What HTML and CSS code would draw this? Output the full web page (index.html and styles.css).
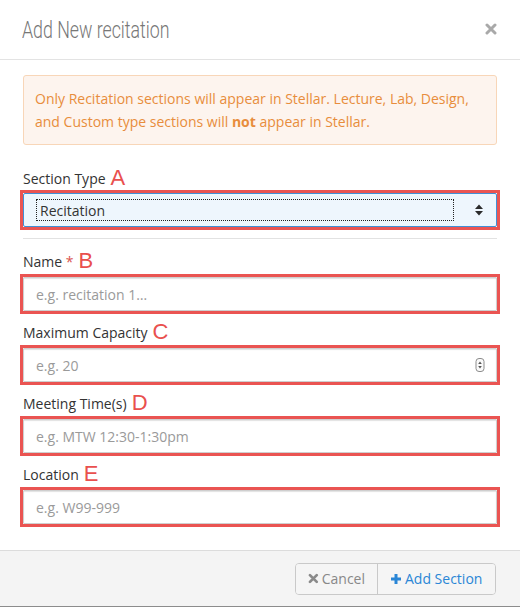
FILE: index.html
```html
<!DOCTYPE html>
<html>
<head>
<meta charset="utf-8">
<link rel="stylesheet" href="styles.css">
</head>
<body>
<div class="modal">
  <div class="header">
    <h4 class="title">Add New recitation</h4>
    <svg class="close" width="12" height="12" viewBox="0 0 12 12"><path d="M2 2 L10 10 M10 2 L2 10" stroke="#a9a9a9" stroke-width="3" stroke-linecap="round"/></svg>
  </div>
  <div class="body">
    <p class="alert">Only Recitation sections will appear in Stellar. Lecture, Lab, Design, and Custom type sections will <b>not</b> appear in Stellar.</p>

    <div class="label-row first"><span class="label">Section Type</span><span class="letter">A</span></div>
    <div class="box">
      <div class="select">
        <span class="focus-ring">Recitation</span>
        <svg class="carets" width="10" height="14" viewBox="0 0 10 14"><path d="M1 6 L5 1.5 L9 6 Z M1 8 L5 12.5 L9 8 Z" fill="#2b2b2b"/></svg>
      </div>
    </div>
    <div class="rule"></div>

    <div class="group">
      <div class="label-row"><span class="label">Name <span class="req">*</span></span><span class="letter">B</span></div>
      <div class="box"><input class="input" type="text" placeholder="e.g. recitation 1…"></div>
    </div>
    <div class="group">
      <div class="label-row"><span class="label">Maximum Capacity</span><span class="letter">C</span></div>
      <div class="box">
        <div class="input number">
          <span class="ph">e.g. 20</span>
          <svg class="spin" width="10" height="14" viewBox="0 0 10 14"><rect x="1" y="0.5" width="8" height="13" rx="3" fill="#fafafa" stroke="#8c8c8c"/><path d="M3.2 6 L5 3.6 L6.8 6 Z M3.2 8 L5 10.4 L6.8 8 Z" fill="#555"/></svg>
        </div>
      </div>
    </div>
    <div class="group">
      <div class="label-row"><span class="label">Meeting Time(s)</span><span class="letter">D</span></div>
      <div class="box"><input class="input" type="text" placeholder="e.g. MTW 12:30-1:30pm"></div>
    </div>
    <div class="group">
      <div class="label-row"><span class="label">Location</span><span class="letter">E</span></div>
      <div class="box"><input class="input" type="text" placeholder="e.g. W99-999"></div>
    </div>
  </div>
  <div class="footer">
    <div class="btn-group">
      <button class="btn cancel"><svg width="11" height="11" viewBox="0 0 11 11"><path d="M2 2 L9 9 M9 2 L2 9" stroke="#8a8a8a" stroke-width="2.8" stroke-linecap="round"/></svg>Cancel</button>
      <button class="btn add"><svg width="12" height="12" viewBox="0 0 12 12"><path d="M6 1 V11 M1 6 H11" stroke="#2a86d6" stroke-width="3"/></svg>Add Section</button>
    </div>
  </div>
</div>
</body>
</html>
```
FILE: styles.css
```css
* { box-sizing: border-box; }
html, body { margin: 0; padding: 0; background: #fff; }
body { font-family: "Open Sans", "DejaVu Sans", sans-serif; font-size: 14px; color: #333; }

.modal { width: 520px; height: 607px; display: flex; flex-direction: column; }

.header {
  height: 60px;
  border-bottom: 1px solid #e3e3e3;
  display: flex;
  align-items: center;
  justify-content: space-between;
  padding: 0 23px 0 22px;
}
.title {
  margin: 0;
  font-family: Roboto, "Liberation Sans", sans-serif;
  font-weight: 300;
  font-size: 24px;
  color: #777;
  transform: scaleX(0.74);
  transform-origin: left center;
  white-space: nowrap;
}
.close { margin-top: -1px; }

.body { flex: 1; padding: 15px 23px 0 23px; }

.alert {
  margin: 0;
  background: #fdf4ee;
  border: 1px solid #f8d6b8;
  border-radius: 3px;
  color: #e88d3c;
  line-height: 23px;
  padding: 11px;
  height: 70px;
}
.alert b { font-weight: 700; }

.label-row { height: 26px; display: flex; align-items: center; }
.label-row.first { margin-top: 21px; height: 24px; }
.label { color: #333; }
.req { color: #d9534f; }
.letter {
  font-family: "Liberation Sans", Arial, sans-serif;
  font-size: 22px;
  color: #e9504e;
  margin-left: 5px;
  line-height: 1;
}

.box {
  border: 3px solid #ea5452;
  margin: 0 -3px;
  height: 40px;
}

.select {
  height: 34px;
  border: 1px solid #3f8fd6;
  border-radius: 2px;
  background: #eef6fd;
  display: flex;
  align-items: center;
  justify-content: space-between;
  padding: 0 12px 0 12px;
}
.focus-ring {
  flex: 0 0 418px;
  height: 22px;
  border: 1px dotted #222;
  display: flex;
  align-items: center;
  padding-left: 3px;
  color: #333;
}

.rule { height: 1px; background: #e2e2e2; margin: 8px 0 9px; }

.group { margin-bottom: 5px; }

.input {
  display: block;
  width: 100%;
  height: 34px;
  border: 1px solid #cfcfcf;
  border-radius: 1px;
  box-shadow: inset 0 1px 1px rgba(0,0,0,0.12);
  font-family: "Open Sans", sans-serif;
  font-size: 14px;
  padding: 0 12px;
  color: #333;
  background: #fff;
  outline: none;
}
.input::placeholder { color: #9a9a9a; }
.number { display: flex; align-items: center; justify-content: space-between; padding-right: 11px; }
.ph { color: #9a9a9a; }

.footer {
  height: 57px;
  background: #f4f4f4;
  border-top: 1px solid #dcdcdc;
  border-bottom: 1px solid #8c8c8c;
  display: flex;
  align-items: center;
  justify-content: flex-end;
  padding-right: 24px;
}
.btn-group { display: flex; border: 1px solid #c9c9c9; border-radius: 4px; height: 32px; overflow: hidden; }
.btn {
  font-family: "Open Sans", sans-serif;
  font-size: 14px;
  border: 0;
  background: #f5f5f5;
  display: flex;
  align-items: center;
  gap: 3px;
  height: 30px;
  margin: 0;
}
.cancel { color: #888; padding: 0 12px; border-right: 1px solid #c9c9c9; width: 82px; }
.add { color: #2a86d6; padding: 0 12px; width: 117px; }
```
